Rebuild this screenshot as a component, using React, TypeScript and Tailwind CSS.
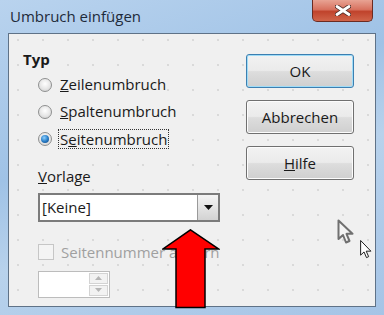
import React from 'react';

const font = { fontFamily: '"Open Sans", "Noto Sans", sans-serif' };

function Radio({ checked }: { checked?: boolean }) {
    return (
        <span className="w-[14px] h-[14px] rounded-full border border-[#8e8f8f] bg-[radial-gradient(circle_at_50%_40%,#ffffff_0%,#e6e6e6_55%,#c9c9c9_100%)] flex items-center justify-center shrink-0">
            {checked && (
                <span className="w-[8px] h-[8px] rounded-full bg-[radial-gradient(circle_at_40%_35%,#8fd0ff_0%,#2a7fc8_50%,#0d3f7a_100%)]" />
            )}
        </span>
    );
}

function WinButton({ children, primary }: { children: React.ReactNode; primary?: boolean }) {
    return (
        <div
            className={`h-[34px] w-[108px] rounded-[3px] border flex items-center justify-center text-[15px] text-[#1a1a1a] bg-[linear-gradient(#f2f2f2_0%,#ebebeb_48%,#dddddd_52%,#cfcfcf_100%)] ${
                primary ? 'border-[#3c7fb1] shadow-[inset_0_0_0_1px_#9fdcf7]' : 'border-[#707070] shadow-[inset_0_0_0_1px_#fcfcfc]'
            }`}
        >
            {children}
        </div>
    );
}

function Cursor({ size }: { size: number }) {
    return (
        <svg width={size} height={size * 1.55} viewBox="0 0 12 19">
            <path
                d="M0.5 0.5 L0.5 15.5 L4 12.2 L6.5 18 L8.7 17 L6.2 11.4 L11 11.4 Z"
                fill="#ffffff"
                stroke="#1a1a1a"
                strokeWidth="1"
                strokeLinejoin="round"
            />
        </svg>
    );
}

export default function App() {
    return (
        <div
            className="relative w-[384px] h-[315px] overflow-hidden bg-[linear-gradient(160deg,#b9d3ee_0%,#9fc2e6_40%,#b8d2ec_60%,#a5c4e6_100%)] flex flex-col"
            style={font}
        >
            {/* title bar */}
            <div className="h-[33px] flex justify-between items-start shrink-0">
                <span className="ml-[10px] mt-[5px] text-[15px] text-[#1e2a3a]">Umbruch einfügen</span>
                <div className="mr-[11px] w-[61px] h-[22px] rounded-b-[5px] border border-t-0 border-[#6b2b22] bg-[linear-gradient(#e8a393_0%,#d8725f_45%,#c0432c_55%,#d0644a_100%)] flex items-center justify-center">
                    <svg width="16" height="11" viewBox="0 0 16 11">
                        <path d="M2 1.5 L14 9.5 M14 1.5 L2 9.5" stroke="#4a2a25" strokeWidth="4.5" strokeLinecap="round" />
                        <path d="M2 1.5 L14 9.5 M14 1.5 L2 9.5" stroke="#ffffff" strokeWidth="2.8" strokeLinecap="round" />
                    </svg>
                </div>
            </div>

            {/* client area */}
            <div className="ml-[8px] mr-[8px] h-[274px] border border-[#5f7287] bg-[#f0f0f0] bg-[radial-gradient(circle_at_1px_1px,#c2c2c2_0.5px,transparent_0.9px)] bg-[length:25px_25px] bg-[position:8px_5px] flex text-[15px] text-[#1a1a1a]">
                <div className="pl-[14px] pt-[16px] w-[222px]">
                    <div className="font-bold leading-[18px]">Typ</div>
                    <div className="pl-[15px] mt-[7px] flex flex-col gap-[8px]">
                        <div className="flex items-center gap-[8px] h-[19px]">
                            <Radio />
                            <span><u>Z</u>eilenumbruch</span>
                        </div>
                        <div className="flex items-center gap-[8px] h-[19px]">
                            <Radio />
                            <span><u>S</u>paltenumbruch</span>
                        </div>
                        <div className="flex items-center gap-[7px] h-[19px]">
                            <Radio checked />
                            <span className="outline outline-1 outline-dotted outline-[#333] px-[1px] leading-[18px]">
                                S<u>e</u>itenumbruch
                            </span>
                        </div>
                    </div>

                    <div className="pl-[15px] mt-[19px]">
                        <div className="leading-[18px]"><u>V</u>orlage</div>
                        <div className="mt-[8px] w-[182px] h-[29px] border-2 border-[#7b7b7b] bg-white flex">
                            <span className="flex-1 pl-[2px] leading-[24px]">[Keine]</span>
                            <div className="w-[21px] border-l border-[#9a9a9a] bg-[linear-gradient(#f4f4f4_0%,#e4e4e4_50%,#d2d2d2_100%)] flex items-center justify-center">
                                <svg width="9" height="5" viewBox="0 0 9 5">
                                    <path d="M0 0 L9 0 L4.5 5 Z" fill="#111" />
                                </svg>
                            </div>
                        </div>

                        <div className="mt-[19px] flex items-center gap-[7px]">
                            <span className="w-[16px] h-[16px] border border-[#c6c6c6] bg-[#f4f4f4]" />
                            <span className="text-[#a0a0a0]">Seitennummer ändern</span>
                        </div>

                        <div className="mt-[7px] w-[72px] h-[27px] border border-[#bcbcbc] bg-white flex">
                            <div className="flex-1" />
                            <div className="w-[21px] flex flex-col p-[1px] gap-[1px]">
                                <div className="flex-1 border border-[#d3d3d3] bg-[#f2f2f2] flex items-center justify-center">
                                    <svg width="7" height="4" viewBox="0 0 7 4"><path d="M0 4 L7 4 L3.5 0 Z" fill="#b5b5b5" /></svg>
                                </div>
                                <div className="flex-1 border border-[#d3d3d3] bg-[#f2f2f2] flex items-center justify-center">
                                    <svg width="7" height="4" viewBox="0 0 7 4"><path d="M0 0 L7 0 L3.5 4 Z" fill="#b5b5b5" /></svg>
                                </div>
                            </div>
                        </div>
                    </div>
                </div>

                <div className="pl-[15px] pt-[20px] flex flex-col gap-[12px]">
                    <WinButton primary>OK</WinButton>
                    <WinButton>Abbrechen</WinButton>
                    <WinButton><span><u>H</u>ilfe</span></WinButton>
                </div>
            </div>
            <div className="flex-1" />

            {/* red arrow overlay */}
            <svg className="absolute left-[162px] top-[229px]" width="58" height="80" viewBox="0 0 58 80">
                <path d="M28.5 0.8 L56.5 20 L43 20 L43 78.5 L14 78.5 L14 20 L1 20 Z" fill="#ff0000" stroke="#000" strokeWidth="1.5" strokeLinejoin="miter" />
            </svg>

            {/* cursors */}
            <div className="absolute left-[337px] top-[219px]">
                <svg width="17" height="26" viewBox="0 0 17 26">
                    <path d="M1.5 1.5 L1.5 20 L6 16 L9 23.5 L12.5 22 L9.5 14.8 L15.5 14.8 Z" fill="#f4f4f4" stroke="#707070" strokeWidth="2" strokeLinejoin="round" />
                </svg>
            </div>
            <div className="absolute left-[360px] top-[240px]">
                <Cursor size={12} />
            </div>
        </div>
    );
}
